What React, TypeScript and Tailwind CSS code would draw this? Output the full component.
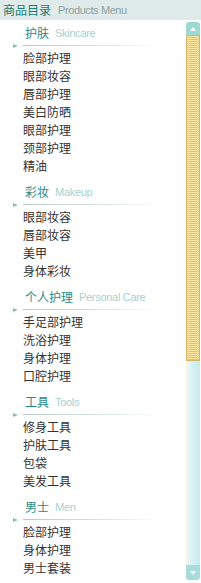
import React from "react";

const sections = [
  { cn: "护肤", en: "Skincare", items: ["脸部护理", "眼部妆容", "唇部护理", "美白防晒", "眼部护理", "颈部护理", "精油"] },
  { cn: "彩妆", en: "Makeup", items: ["眼部妆容", "唇部妆容", "美甲", "身体彩妆"] },
  { cn: "个人护理", en: "Personal Care", items: ["手足部护理", "洗浴护理", "身体护理", "口腔护理"] },
  { cn: "工具", en: "Tools", items: ["修身工具", "护肤工具", "包袋", "美发工具"] },
  { cn: "男士", en: "Men", items: ["脸部护理", "身体护理", "男士套装"] },
];

const cjk = "font-['Noto_Sans_CJK_SC','Liberation_Sans',sans-serif]";
const latin = "font-['Liberation_Sans',Arial,sans-serif]";

function SectionHeader({ cn, en, first }: { cn: string; en: string; first: boolean }) {
  return (
    <div className={first ? "pt-[5px] pb-[1px]" : "pt-[9px] pb-[1px]"}>
      <div className="flex items-center h-[16px] pl-[25px] gap-[6px]">
        <span className={`${cjk} text-[12px] leading-[16px] text-[#2b8985]`}>{cn}</span>
        <span className={`${latin} text-[11px] leading-[16px] text-[#a6d2cf] tracking-[-0.3px]`}>{en}</span>
      </div>
      <div className="flex items-center h-[5px] mt-[2px]">
        <div className="ml-[13px] w-0 h-0 border-y-[2.5px] border-y-transparent border-l-[5px] border-l-[#8dbdbb]" />
        <div className="ml-[5px] w-[135px] h-px bg-[linear-gradient(to_right,#b9c9c8,#d9e3e2_60%,#ffffff)]" />
      </div>
    </div>
  );
}

function Scrollbar() {
  return (
    <div className="w-[14px] mr-px pt-[2px] pb-[3px] flex flex-col">
      {/* up button */}
      <div className="h-[13px] rounded-t-[3px] bg-[#9ed8d4] flex items-center justify-center">
        <div className="w-0 h-0 border-x-[3.5px] border-x-transparent border-b-[4px] border-b-white" />
      </div>
      {/* thumb */}
      <div className="h-[326px] border border-[#d6b56a] bg-[repeating-linear-gradient(to_bottom,#fbe6a2_0px,#fbe6a2_1px,#e9c25e_1px,#e9c25e_2px)] p-px">
        <div className="h-full border-x border-[#f7dd96]" />
      </div>
      {/* track */}
      <div className="flex-1 bg-[linear-gradient(to_right,#fbf2d8_0px,#eaf7f8_2px,#d8f1f4_40%,#c7ecf0)]" />
      {/* down button */}
      <div className="h-[15px] rounded-b-[3px] bg-[#a8dcdb] flex items-center justify-center">
        <div className="w-0 h-0 border-x-[3.5px] border-x-transparent border-t-[4px] border-t-white" />
      </div>
    </div>
  );
}

export default function App() {
  return (
    <div className="w-[201px] h-[583px] bg-white flex flex-col overflow-hidden">
      {/* Title bar */}
      <div className="h-[20px] bg-[#deebea] flex items-center pl-[3px] gap-[7px]">
        <span className={`${cjk} text-[12px] leading-[16px] text-[#1c7a76]`}>商品目录</span>
        <span className={`${latin} text-[11px] leading-[16px] text-[#8fa09f] tracking-[-0.4px]`}>Products Menu</span>
      </div>

      {/* Body */}
      <div className="flex-1 flex min-h-0">
        <div className="flex-1 overflow-hidden">
          {sections.map((s, i) => (
            <div key={s.cn}>
              <SectionHeader cn={s.cn} en={s.en} first={i === 0} />
              {s.items.map((item, j) => (
                <div
                  key={j}
                  className={`${cjk} h-[18px] leading-[18px] pl-[23px] text-[12px] text-[#333333]`}
                >
                  {item}
                </div>
              ))}
            </div>
          ))}
        </div>
        <Scrollbar />
      </div>
    </div>
  );
}
